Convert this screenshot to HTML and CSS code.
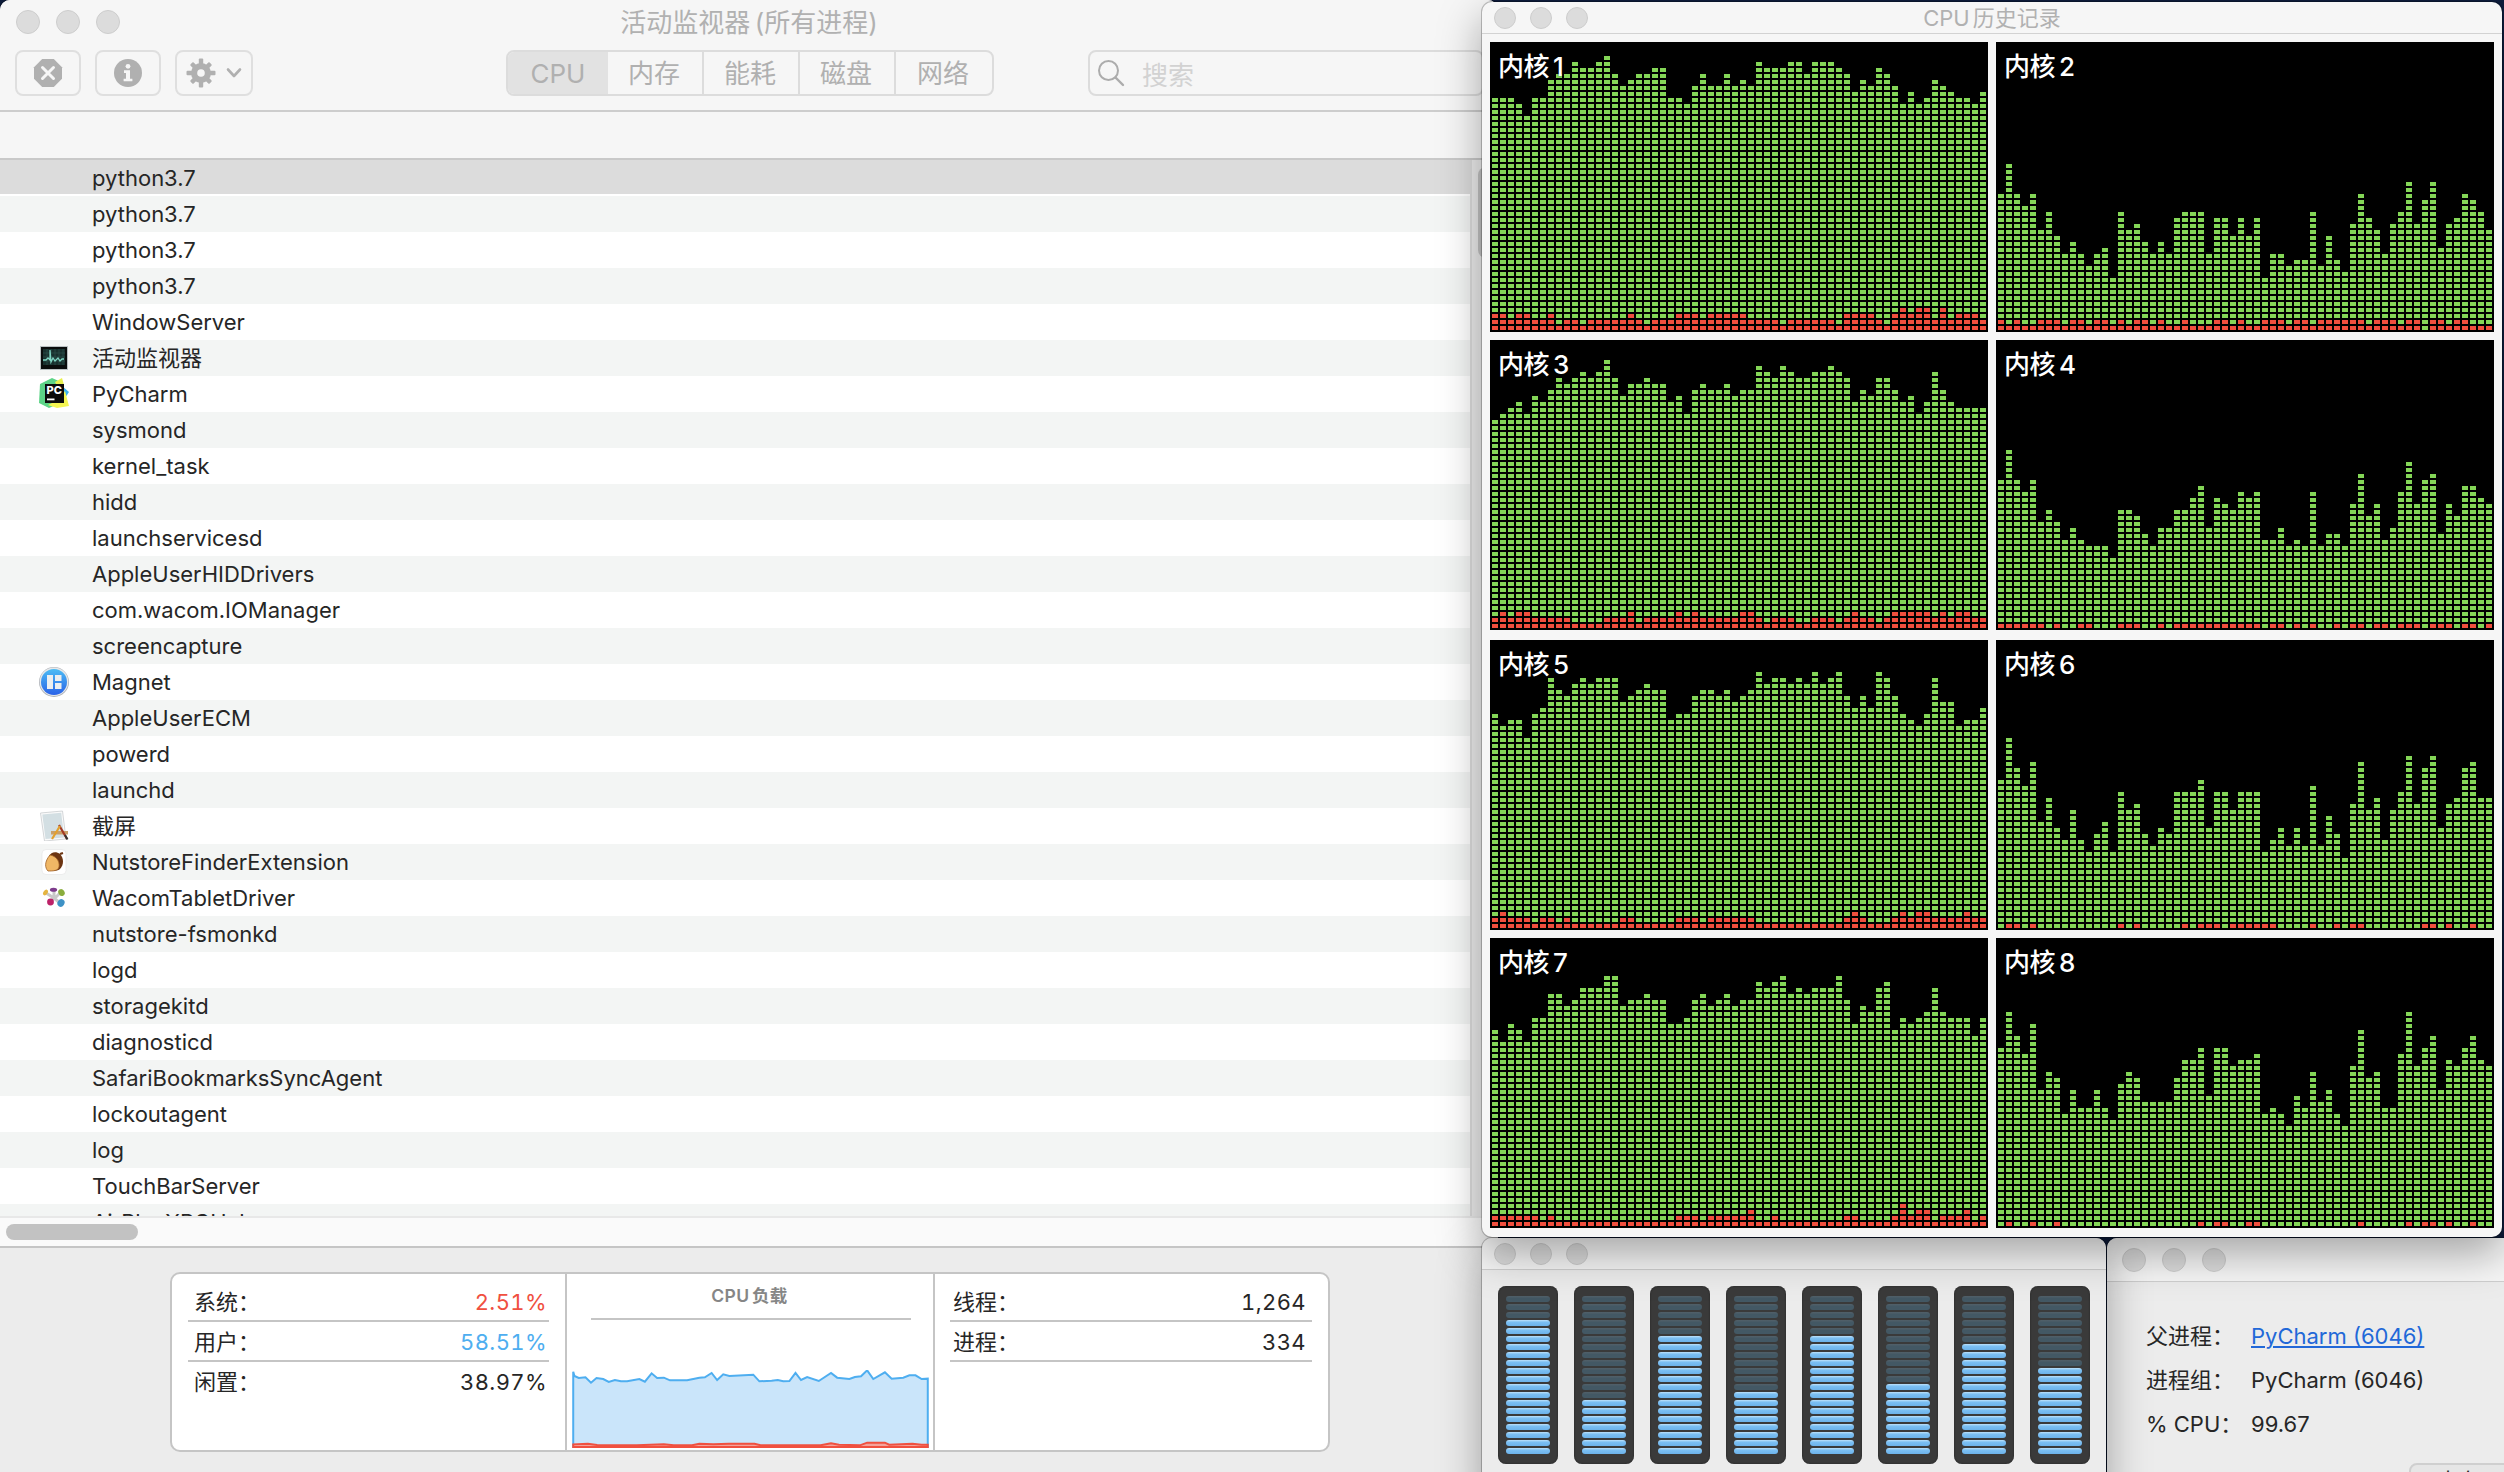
FILE: index.html
```html
<!DOCTYPE html>
<html lang="zh-CN">
<head>
<meta charset="utf-8">
<title>活动监视器</title>
<link rel="stylesheet" href="styles.css">
</head>
<body>
<main class="desktop">

<section class="window monitor">
  <header class="monitor-head">
    <div class="titlebar">
      <div class="lights"><i></i><i></i><i></i></div>
      <h1 class="title">活动监视器 (所有进程)</h1>
    </div>
    <div class="toolbar">
      <button class="tool" type="button" aria-label="退出进程">
        <svg width="30" height="30" viewBox="0 0 30 30"><path d="M9.2 1h11.6L29 9.2v11.6L20.800 29H9.200L1 20.800V9.200z" fill="#b0b0b0"/><path d="M9.500 9.500l11 11M20.500 9.500l-11 11" stroke="#f6f6f6" stroke-width="3" stroke-linecap="round"/></svg>
      </button>
      <button class="tool" type="button" aria-label="简介">
        <svg width="30" height="30" viewBox="0 0 30 30"><circle cx="15" cy="15" r="14" fill="#b0b0b0"/><circle cx="15" cy="8.300" r="2.400" fill="#f6f6f6"/><path d="M11 12.300h6v8.400h2.400v2.600h-8.800v-2.600H13v-5.800h-2z" fill="#f6f6f6"/></svg>
      </button>
      <button class="tool tool-menu" type="button" aria-label="操作">
        <svg width="30" height="30" viewBox="-15 -15 30 30"><g fill="#b0b0b0"><rect x="-2.200" y="-14.500" width="4.400" height="29" rx="1"/><rect x="-14.500" y="-2.200" width="29" height="4.400" rx="1"/><g transform="rotate(45)"><rect x="-2.200" y="-13.500" width="4.400" height="27" rx="1"/><rect x="-13.500" y="-2.200" width="27" height="4.400" rx="1"/></g><circle r="10"/></g><circle r="3.800" fill="#f6f6f6"/></svg>
        <svg width="16" height="12" viewBox="0 0 16 12"><path d="M2 2.500l6 6.500 6-6.500" fill="none" stroke="#b0b0b0" stroke-width="2.600" stroke-linecap="round" stroke-linejoin="round"/></svg>
      </button>
      <nav class="tabs"><a class="tab on">CPU</a><a class="tab">内存</a><a class="tab">能耗</a><a class="tab">磁盘</a><a class="tab">网络</a></nav>
      <div class="search">
        <svg width="28" height="28" viewBox="0 0 28 28"><circle cx="11.500" cy="11.500" r="9.500" fill="none" stroke="#acacac" stroke-width="2"/><path d="M18.500 18.500l7.500 7.500" stroke="#acacac" stroke-width="2.400" stroke-linecap="round"/></svg>
        <span>搜索</span>
      </div>
    </div>
  </header>
  <div class="columns-head"></div>
  <div class="table">
    <ul class="rows">
      <li class="row selected"><span>python3.7</span></li>
      <li class="row"><span>python3.7</span></li>
      <li class="row"><span>python3.7</span></li>
      <li class="row"><span>python3.7</span></li>
      <li class="row"><span>WindowServer</span></li>
      <li class="row"><svg class="icon" viewBox="0 0 32 32"><rect x="2.500" y="5.500" width="27" height="23" fill="#0a0d0d" stroke="#b9c0c2"/><rect x="5" y="8" width="22" height="16" fill="#18302e"/><path d="M9 8v16M13 8v16M17 8v16M21 8v16M25 8v16M5 12h22M5 16h22M5 20h22" stroke="#2c504b" stroke-width=".7"/><path d="M5 19h3l2-2 2 2V9l1 12 2-4 2 3 3-3 2 3 2-2h2" fill="none" stroke="#7fd6c4" stroke-width="1.300"/></svg><span>活动监视器</span></li>
      <li class="row"><svg class="icon" viewBox="0 0 32 32"><path d="M2 7L14 1l9 4-3 22-9 4L1 26z" fill="#5dd487"/><path d="M17 5l7-4 2 7-6 3z" fill="#e8f04f"/><path d="M24 9l7 6-4 6z" fill="#3bb2f0"/><path d="M27 14l4 15-12 2-9-3 12-6z" fill="#f4f552"/><rect x="7" y="7" width="19" height="19" fill="#0b0b0b"/><text x="8.500" y="17" class="pc">PC</text><rect x="9" y="21.500" width="7.500" height="1.800" fill="#fff"/></svg><span>PyCharm</span></li>
      <li class="row"><span>sysmond</span></li>
      <li class="row"><span>kernel_task</span></li>
      <li class="row"><span>hidd</span></li>
      <li class="row"><span>launchservicesd</span></li>
      <li class="row"><span>AppleUserHIDDrivers</span></li>
      <li class="row"><span>com.wacom.IOManager</span></li>
      <li class="row"><span>screencapture</span></li>
      <li class="row"><svg class="icon" viewBox="0 0 32 32"><defs><linearGradient id="mag" x2="0" y2="1"><stop stop-color="#4cbcf4"/><stop offset="1" stop-color="#2a62e8"/></linearGradient></defs><circle cx="16" cy="17" r="15" fill="#aeb2b8"/><circle cx="16" cy="16.700" r="14.300" fill="#e6e8ea"/><circle cx="16" cy="17" r="13" fill="url(#mag)"/><path d="M9 10h6v14H9zM17 10h6.500v6H17zM17 18h6.500v6H17z" fill="#eceef0"/></svg><span>Magnet</span></li>
      <li class="row"><span>AppleUserECM</span></li>
      <li class="row"><span>powerd</span></li>
      <li class="row"><span>launchd</span></li>
      <li class="row"><svg class="icon" viewBox="0 0 32 32"><path d="M2.500 4L24.500 2l3.500 28-21.500 2z" fill="#fafafa" stroke="#c9cdcf" stroke-width=".8"/><path d="M4.300 5.500L23.200 3.800l3 24.600-18.700 1.600z" fill="#d3dfe3"/><path d="M13 22h17v3.500H13z" fill="#c9a06a"/><path d="M21 16l8 14" stroke="#a33a24" stroke-width="2.200"/><path d="M22 17l-8 13" stroke="#e3a02e" stroke-width="2.200"/><path d="M27 26l2.500 4.500" stroke="#333" stroke-width="2"/></svg><span>截屏</span></li>
      <li class="row"><svg class="icon" viewBox="0 0 32 32"><rect x="4" y="4.500" width="24" height="25" rx="4" fill="#fff" stroke="#e6e6e6" stroke-width=".7"/><path d="M11 11c2-4 7-5 11-2 4 4 4 11 0 15-2 2-6 2-8 1z" fill="#6c3512"/><path d="M22 9l3-1" stroke="#6c3512" stroke-width="2.200"/><path d="M12 10c6 1 10 6 9 12-1 4-6 4-11 4-3-3-4-9 2-16z" fill="#f0b765" stroke="#a06024" stroke-width=".8"/></svg><span>NutstoreFinderExtension</span></li>
      <li class="row"><svg class="icon" viewBox="0 0 32 32"><g transform="translate(0 1)"><path d="M8 11l8 5M16 8v9M22 11l-6 6M12 20l4-4M22 21l-6-5" stroke="#c9c9c9" stroke-width="3"/><ellipse cx="7.500" cy="10.500" rx="3.200" ry="2" transform="rotate(-55 7.500 10.500)" fill="#e5b540"/><ellipse cx="15.500" cy="7.700" rx="3.600" ry="2" fill="#7d3b8c"/><ellipse cx="23.500" cy="10.500" rx="3" ry="3.600" transform="rotate(-35 23.500 10.500)" fill="#8aad3d"/><circle cx="12.500" cy="20" r="3.400" fill="#bd2168"/><ellipse cx="23" cy="21" rx="3.400" ry="3.900" transform="rotate(35 23 21)" fill="#3e92c6"/></g></svg><span>WacomTabletDriver</span></li>
      <li class="row"><span>nutstore-fsmonkd</span></li>
      <li class="row"><span>logd</span></li>
      <li class="row"><span>storagekitd</span></li>
      <li class="row"><span>diagnosticd</span></li>
      <li class="row"><span>SafariBookmarksSyncAgent</span></li>
      <li class="row"><span>lockoutagent</span></li>
      <li class="row"><span>log</span></li>
      <li class="row"><span>TouchBarServer</span></li>
      <li class="row"><span>AirPlayXPCHelper</span></li>
    </ul>
    <div class="vscroll"><div class="vthumb"></div></div>
  </div>
  <div class="hscroll"><div class="hthumb"></div></div>
  <footer class="summary">
    <div class="card">
      <dl class="stats">
        <div class="stat"><dt>系统：</dt><dd class="red">2.51%</dd></div>
        <div class="stat"><dt>用户：</dt><dd class="blue">58.51%</dd></div>
        <div class="stat last"><dt>闲置：</dt><dd>38.97%</dd></div>
      </dl>
      <div class="load">
        <h2>CPU 负载</h2>
        <svg class="load-chart" width="357" height="78" viewBox="934 570 583 234" preserveAspectRatio="none">
          <path class="user" d="M936 802V575L938 588 945 594 956 592 965 608 974 594 985 597 994 606 1004 600 1014 604 1024 604 1044 597 1053 605 1064 580 1073 594 1084 593 1094 601 1122 601 1142 593 1151 592 1162 579 1171 600 1181 583 1191 588 1230 584 1240 604 1260 602 1270 600 1279 604 1289 603 1299 579 1308 600 1318 591 1337 603 1357 579 1367 593 1387 597 1396 591 1406 589 1416 571 1426 597 1445 577 1456 596 1475 593 1485 586 1495 586 1505 597 1515 596V802z"/>
          <path class="sys" d="M936 801V793L960 791 975 795 1040 796 1084 793 1100 796 1130 796 1142 791 1165 793 1190 791 1232 791 1242 796 1340 796 1357 790 1370 794 1404 796 1416 788 1445 788 1452 794 1490 791 1505 794 1515 794V801z"/>
        </svg>
      </div>
      <dl class="stats right">
        <div class="stat"><dt>线程：</dt><dd>1,264</dd></div>
        <div class="stat"><dt>进程：</dt><dd>334</dd></div>
      </dl>
    </div>
  </footer>
</section>

<section class="window info">
  <div class="titlebar"><div class="lights"><i></i><i></i><i></i></div></div>
  <dl class="facts">
    <dt>父进程：</dt><dd><a class="link">PyCharm (6046)</a></dd>
    <dt>进程组：</dt><dd>PyCharm (6046)</dd>
    <dt>% CPU：</dt><dd>99.67</dd>
  </dl>
  <div class="info-tabs"><span>内存</span></div>
</section>

<section class="window usage">
  <div class="titlebar"><div class="lights"><i></i><i></i><i></i></div></div>
  <div class="meters" id="meters"></div>
</section>

<section class="window history">
  <div class="titlebar"><div class="lights"><i></i><i></i><i></i></div><h1 class="title">CPU 历史记录</h1></div>
  <div class="cores" id="cores"></div>
</section>

</main>
<script src="app.js"></script>
</body>
</html>
```
FILE: app.js
```js
// Per-core history in cells: total load and the share used by the system.
const history = [
  {
    total: [39,39,39,38,36,39,39,42,43,43,45,44,44,45,46,43,41,42,43,43,44,44,39,39,38,41,43,41,41,43,41,42,41,45,44,44,44,45,45,43,45,45,45,44,43,40,42,41,44,43,41,38,40,38,39,42,41,40,39,39,38,40],
    system: '33233223122122222321222333233333222212222221333321343442423332'
  },
  {
    total: [23,28,23,21,23,17,20,16,13,15,13,11,13,14,9,20,17,18,15,13,15,13,19,20,20,20,13,19,19,16,19,16,19,9,13,13,11,12,12,20,11,16,12,10,18,23,19,17,13,18,20,25,18,22,25,14,18,19,23,22,20,17],
    system: '21211222122122121221211211122121122212212222221222122022122111'
  },
  {
    total: [35,36,37,38,36,39,38,40,42,41,42,43,42,43,45,42,39,41,41,42,41,41,38,39,36,40,41,40,40,41,39,40,40,44,43,42,44,43,42,42,43,43,44,43,42,38,40,39,42,42,40,38,39,36,38,43,40,38,37,37,37,37],
    system: '23233222221111222312222323222223321222112221232212333332323322'
  },
  {
    total: [25,30,25,23,25,18,20,18,15,17,15,14,14,14,12,20,20,19,16,14,17,17,20,20,22,24,17,22,21,20,23,22,23,15,15,17,14,15,14,23,14,16,16,14,21,26,19,21,15,17,23,28,21,25,26,16,21,19,24,24,22,21],
    system: '11111101001100011100101111111111101101010010110110111011101101'
  },
  {
    total: [36,34,35,35,32,36,37,42,40,39,41,42,41,42,42,42,38,39,40,41,40,40,35,36,36,39,40,40,39,40,38,39,40,43,41,42,42,41,42,41,43,41,42,43,39,37,39,37,43,42,39,36,35,34,36,42,38,38,34,35,35,37],
    system: '23222122121111112211111222122222211111111111232111232332222322'
  },
  {
    total: [25,32,27,24,28,18,22,17,15,20,15,13,16,18,13,23,20,21,16,14,17,16,23,23,23,25,17,23,23,20,23,23,23,13,15,17,14,17,14,24,14,19,16,12,21,28,20,22,15,20,23,29,21,27,29,17,21,22,27,28,22,22],
    system: '01101000000000010100000101110111111000010010110000000110100100'
  },
  {
    total: [33,31,34,33,31,35,35,39,39,37,38,40,40,40,42,42,37,38,38,39,38,38,34,34,35,38,39,37,38,39,37,38,38,41,40,41,42,39,40,39,40,40,40,42,38,34,37,36,40,41,33,35,34,35,36,40,36,35,35,35,32,35],
    system: '22222212111111111111111222122222311211111111221111242331222312'
  },
  {
    total: [30,36,32,29,34,23,26,25,19,23,20,20,23,20,18,24,26,25,21,21,21,21,25,28,28,30,22,30,30,27,28,28,29,19,20,19,17,22,20,26,21,23,19,17,27,33,25,26,20,20,29,36,27,30,32,23,28,27,30,32,28,27],
    system: '01001001000000000000000001011001100000000000010000010110100100'
  }
];

const CELL = 6;
document.getElementById('cores').innerHTML = history.map((core, n) =>
  `<div class="core"><div class="core-name">内核 ${n + 1}</div>` +
  core.total.map((h, i) =>
    `<div class="bar" style="height:${h * CELL}px"><div class="bar-sys" style="height:${core.system[i] * CELL}px"></div></div>`
  ).join('') + '</div>').join('');

// Lit segments out of twenty for each core.
const usage = [17, 7, 15, 8, 15, 9, 14, 11];
document.getElementById('meters').innerHTML = usage.map(lit =>
  '<div class="meter">' +
  Array.from({ length: 20 }, (_, i) => `<i class="${i >= 20 - lit ? 'lit' : ''}"></i>`).join('') +
  '</div>').join('');
```
FILE: styles.css
```css
* { box-sizing: border-box; margin: 0; padding: 0; }
html, body { height: 100%; overflow: hidden; }
body { font-family: Inter, "Noto Sans CJK SC", sans-serif; font-size: 22px; color: #262626; }
.desktop { position: relative; width: 2504px; height: 1472px; overflow: hidden; background: #0e1d3d; }
h1, h2 { font-weight: 400; }
ul { list-style: none; }

.window { position: absolute; display: flex; flex-direction: column; background: #ececec; box-shadow: 0 0 0 1px rgba(0,0,0,.22), 0 16px 44px rgba(0,0,0,.34); }
.titlebar { display: flex; align-items: center; flex: none; position: relative; }
.lights { display: flex; }
.lights i { border-radius: 50%; background: #dcdcdc; border: 1px solid #cdcdcd; }
.title { position: absolute; left: 0; right: 0; text-align: center; color: #b1b1b1; word-spacing: -3px; }

/* Main window */
.monitor { left: 0; top: 0; width: 1498px; height: 1490px; border-radius: 10px; overflow: hidden; }
.monitor-head { height: 112px; background: #f6f6f6; border-bottom: 2px solid #cdcdcd; }
.monitor .titlebar { height: 44px; padding-left: 16px; }
.monitor .lights { gap: 16px; }
.monitor .lights i { width: 24px; height: 24px; }
.monitor .title { font-size: 26px; line-height: 46px; top: 0; }
.toolbar { display: flex; padding: 6px 0 0 15px; height: 52px; }
.tool { width: 66px; height: 46px; margin-right: 14px; display: flex; align-items: center; justify-content: center; border: 2px solid #dfdfdf; border-radius: 8px; background: #f6f6f6; }
.tool-menu { width: 78px; gap: 10px; }
.tabs { display: flex; width: 488px; height: 46px; margin-left: 239px; border: 2px solid #dcdcdc; border-radius: 8px; overflow: hidden; }
.tab { width: 96px; flex: none; line-height: 44px; text-align: center; font-size: 26px; color: #b0b0b0; border-left: 2px solid #dcdcdc; padding-right: 2px; }
.tab.on { width: 98px; border-left: 0; background: #e2e2e2; padding: 0 0 0 2px; }
.tab.on + .tab { border-left-color: #e2e2e2; }
.tab:last-child { width: 98px; }
.search { display: flex; align-items: center; gap: 17px; width: 396px; height: 46px; margin-left: 94px; padding-left: 7px; border: 2px solid #dcdcdc; border-radius: 8px; font-size: 26px; color: #d2d2d2; }
.columns-head { height: 48px; background: #f6f6f6; border-bottom: 2px solid #c9c9c9; }
.table { display: flex; height: 1056px; overflow: hidden; }
.rows { width: 1470px; flex: none; background: #fff; }
.row { height: 36px; line-height: 37px; display: flex; padding-left: 38px; white-space: nowrap; }
.row span { margin-left: 54px; }
.row .icon { width: 32px; height: 32px; margin: 1px -32px 0 0; flex: none; }
.row:nth-child(even) { background: #f3f5f4; }
.row.selected { background: #dcdcdc; border-bottom: 2px solid #fff; }
.pc { font: 800 11px Inter, sans-serif; fill: #fff; }
.vscroll { width: 30px; background: #ececec; border-left: 2px solid #dcdcdc; padding: 7px 0 0 6px; }
.vthumb { width: 16px; height: 91px; border-radius: 8px; background: #c2c2c2; }
.hscroll { height: 32px; background: #fafafa; border-top: 2px solid #e8e8e8; border-bottom: 2px solid #c5c5c5; padding: 6px; }
.hthumb { width: 132px; height: 16px; border-radius: 8px; background: #c2c2c2; }
.summary { padding: 24px 0 0 170px; }
.card { display: flex; width: 1160px; height: 180px; border: 2px solid #c5c5c5; border-radius: 10px; background: #fff; }
.stats { width: 394px; padding: 8px 16px; }
.stats.right { width: 394px; padding-right: 16px; padding-left: 15px; }
.stat { display: flex; justify-content: space-between; height: 40px; padding: 0 2px 0 6px; line-height: 41px; border-bottom: 2px solid #c5c5c5; }
.stats.right .stat { padding: 0 6px 0 3px; }
.stat.last { border: 0; }
.stat dd { letter-spacing: .4px; font-variant-numeric: tabular-nums; }
.red { color: #f0503f; }
.blue { color: #4eaef0; }
.load { width: 370px; border: solid #c5c5c5; border-width: 0 2px; padding: 0 4px 0 5px; display: flex; flex-direction: column; }
.load h2 { width: 320px; height: 46px; margin: 0 auto; padding: 8px 2px 0 0; line-height: 28px; font-size: 17.500px; font-weight: 600; color: #868686; text-align: center; letter-spacing: .3px; word-spacing: -2px; border-bottom: 2px solid #c5c5c5; }
.load-chart { margin-top: 50px; }
.load-chart path { stroke-width: 2; vector-effect: non-scaling-stroke; }
.user { fill: #cae5fa; stroke: #4eaef0; }
.sys { fill: #f4a39b; stroke: #f0503f; }

/* CPU history */
.history { left: 1482px; top: 2px; width: 1020px; height: 1235px; border-radius: 10px; background: #f6f6f6; }
.history .titlebar { height: 32px; padding-left: 12px; border-bottom: 1px solid #d2d2d2; }
.history .lights, .usage .lights { gap: 14px; }
.history .lights i, .usage .lights i { width: 22px; height: 22px; }
.history .title { font-size: 22px; line-height: 32px; top: 0; }
.cores { display: grid; grid-template-columns: 498px 498px; grid-template-rows: 290px 290px 290px 290px; gap: 8px; padding: 8px; }
.core:nth-child(n+5) { margin-top: 2px; margin-bottom: -2px; }
.core { position: relative; display: flex; align-items: flex-end; gap: 2px; padding: 2px 2px 0; background: #000; }
.core-name { position: absolute; left: 8px; top: 6px; font-size: 26px; line-height: 38px; color: #fff; letter-spacing: -.5px; word-spacing: -2.500px; text-shadow: 0 0 3px rgba(0,0,0,.5); font-weight: 500; }
.bar { width: 6px; display: flex; align-items: flex-end; background: repeating-linear-gradient(#84d657 0 4px, #000 4px 6px); }
.bar-sys { width: 6px; background: repeating-linear-gradient(#f04f3e 0 4px, #000 4px 6px); }

/* CPU usage */
.usage { left: 1482px; top: 1238px; width: 624px; height: 260px; border-radius: 10px; }
.usage .titlebar { height: 32px; padding-left: 12px; background: #f6f6f6; border-bottom: 1px solid #cfcfcf; border-radius: 10px 10px 0 0; }
.meters { display: flex; gap: 16px; padding: 16px; }
.meter { width: 60px; height: 178px; padding: 10px 8px; display: flex; flex-direction: column; gap: 2px; border-radius: 8px; background: #3a3a3a; box-shadow: inset 0 0 2px #222; }
.meter i { height: 6px; border-radius: 3px; background: linear-gradient(#526069, #435864 40%); }
.meter .lit { background: linear-gradient(#bfe2fb, #7cc0f3 35%, #6cb2ea); }

/* Process info */
.info { left: 2107px; top: 1238px; width: 620px; height: 300px; border-radius: 10px; }
.info .titlebar { height: 44px; padding-left: 15px; background: #f6f6f6; border-bottom: 1px solid #cfcfcf; border-radius: 10px 10px 0 0; }
.info .lights { gap: 16px; }
.info .lights i { width: 24px; height: 24px; }
.facts { display: grid; grid-template-columns: 105px 1fr; grid-auto-rows: 44px; padding: 32px 0 0 39px; line-height: 44px; }
.link { color: #2268d8; text-decoration: underline; text-underline-offset: 2px; text-decoration-thickness: 2px; }
.info-tabs { margin: 17px 0 0 302px; width: 280px; height: 40px; border: 2px solid #cfcfcf; border-radius: 8px; background: #e6e6e6; padding-left: 26px; line-height: 33px; }
```
